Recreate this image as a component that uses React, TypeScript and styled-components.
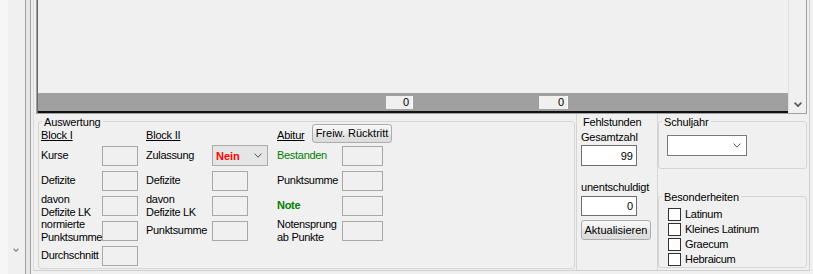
import React from 'react';
import styled, { createGlobalStyle } from 'styled-components';

const GlobalStyle = createGlobalStyle`
  html, body { margin: 0; padding: 0; background: #f0f0f0; }
  body { font-family: "Liberation Sans", Arial, sans-serif; font-size: 11px; color: #000; }
  * { box-sizing: border-box; }
`;

const Window = styled.div`
  width: 813px;
  height: 274px;
  display: flex;
  background: #f0f0f0;
  overflow: hidden;
`;

const LeftPane = styled.div`
  width: 25px;
  flex-shrink: 0;
  display: flex;
`;

const LeftList = styled.div`
  width: 8px;
  background: #f6f6f6;
`;

const LeftScroll = styled.div`
  width: 16px;
  display: flex;
  flex-direction: column;
  justify-content: flex-end;
  padding-bottom: 16px;
`;

const ArrowBox = styled.div<{ $h: number }>`
  height: ${(p) => p.$h}px;
  display: flex;
  align-items: center;
  justify-content: center;
`;

const Splitter = styled.div`
  width: 6px;
  flex-shrink: 0;
  background: #e6e6e6;
  border-left: 1px solid #a0a0a0;
  border-right: 1px solid #a0a0a0;
`;

const Main = styled.div`
  flex: 1;
  display: flex;
  padding-left: 2px;
`;

const Frame = styled.div`
  width: 777px;
  height: 271px;
  display: flex;
  flex-direction: column;
  padding: 0 2px;
  border-left: 1px solid #dadada;
  border-right: 1px solid #cfcfcf;
  border-bottom: 1px solid #cfcfcf;
`;

const Grid = styled.div`
  height: 114px;
  flex-shrink: 0;
  display: flex;
  border-left: 1px solid #a0a0a0;
  border-right: 1px solid #a0a0a0;
  border-bottom: 1px solid #a0a0a0;
`;

const GridBody = styled.div`
  flex: 1;
  display: flex;
  border-left: 1px solid #696969;
`;

const DataArea = styled.div`
  width: 750px;
  display: flex;
  flex-direction: column;
  border-bottom: 2px solid #101010;
`;

const Rows = styled.div`
  flex: 1;
  background: #f0f0f0;
`;

const Footer = styled.div`
  height: 18px;
  background: #a0a0a0;
  display: flex;
  align-items: flex-start;
  padding: 3px 0 0 348px;
`;

const FooterCell = styled.div<{ $w: number; $ml?: number }>`
  width: ${(p) => p.$w}px;
  height: 13px;
  margin-left: ${(p) => p.$ml ?? 0}px;
  background: #f0f0f0;
  border-right: 1px solid #ffffff;
  text-align: right;
  padding-right: 3px;
  line-height: 13px;
`;

const VScroll = styled.div`
  flex: 1;
  background: #f0f0f0;
  border-left: 1px solid #e2e2e2;
  display: flex;
  flex-direction: column;
  justify-content: flex-end;
`;

const Bottom = styled.div`
  flex: 1;
  display: flex;
  padding-left: 2px;
`;

const GroupBox = styled.div<{ $w: number; $h: number; $mt: number }>`
  position: relative;
  width: ${(p) => p.$w}px;
  height: ${(p) => p.$h}px;
  margin-top: ${(p) => p.$mt}px;
  border: 1px solid #d5d5d5;
  border-radius: 3px;
  flex-shrink: 0;
`;

const Caption = styled.span`
  position: absolute;
  top: -6px;
  left: 3px;
  padding: 0 2px;
  line-height: 13px;
  letter-spacing: -0.15px;
  background: #f0f0f0;
  white-space: nowrap;
`;

const Columns = styled.div`
  display: flex;
  padding-left: 2px;
`;

const Column = styled.div<{ $w: number; $ml?: number }>`
  width: ${(p) => p.$w}px;
  margin-left: ${(p) => p.$ml ?? 0}px;
  display: flex;
  flex-direction: column;
`;

const HeaderRow = styled.div`
  height: 21px;
  display: flex;
  align-items: flex-end;
`;

const FieldRow = styled.div`
  height: 25px;
  display: flex;
  align-items: center;
`;

const Heading = styled.span<{ $w?: number }>`
  ${(p) => (p.$w ? `width: ${p.$w}px;` : '')}
  line-height: 13px;
  padding-bottom: 1px;
  letter-spacing: -0.2px;
  text-decoration: underline;
  white-space: nowrap;
`;

const Label = styled.span<{ $w: number; $color?: string; $bold?: boolean }>`
  width: ${(p) => p.$w}px;
  flex-shrink: 0;
  line-height: 13px;
  letter-spacing: -0.3px;
  white-space: nowrap;
  color: ${(p) => p.$color ?? '#000'};
  font-weight: ${(p) => (p.$bold ? 'bold' : 'normal')};
`;

const ReadBox = styled.div<{ $w: number }>`
  width: ${(p) => p.$w}px;
  height: 20px;
  flex-shrink: 0;
  background: #f0f0f0;
  border: 1px solid #a8a8a8;
`;

const ZulCombo = styled.div`
  width: 56px;
  height: 21px;
  flex-shrink: 0;
  display: flex;
  align-items: center;
  justify-content: space-between;
  padding: 0 5px 0 3px;
  background: #e5e5e5;
  border: 1px solid #acacac;
  color: #ff0000;
  font-weight: bold;
`;

const Button = styled.button<{ $w: number; $h: number }>`
  width: ${(p) => p.$w}px;
  height: ${(p) => p.$h}px;
  padding: 0;
  margin: 0;
  font-family: "Liberation Sans", Arial, sans-serif;
  font-size: 11px;
  color: #000;
  line-height: 13px;
  border: 1px solid #acacac;
  border-radius: 3px;
  background: linear-gradient(#f8f8f8, #ececec 50%, #e2e2e2 51%, #dcdcdc);
  white-space: nowrap;
`;

const AbiButton = styled(Button)`
  margin-left: 7px;
`;

const FehlPanel = styled.div`
  width: 82px;
  margin-left: 1px;
  flex-shrink: 0;
  display: flex;
  flex-direction: column;
  align-items: flex-start;
  padding: 2px 0 0 4px;
  border-left: 1px solid #d5d5d5;
  border-right: 1px solid #d5d5d5;
`;

const PanelText = styled.span<{ $mt: number; $ml?: number }>`
  margin-top: ${(p) => p.$mt}px;
  margin-left: ${(p) => p.$ml ?? 0}px;
  line-height: 13px;
  letter-spacing: -0.2px;
  white-space: nowrap;
`;

const NumInput = styled.div<{ $h: number; $mt: number }>`
  width: 56px;
  height: ${(p) => p.$h}px;
  margin-top: ${(p) => p.$mt}px;
  background: #ffffff;
  border: 1px solid #6e6e6e;
  display: flex;
  align-items: center;
  justify-content: flex-end;
  padding-right: 3px;
`;

const RefreshButton = styled(Button)`
  margin-top: 4px;
`;

const RightCol = styled.div`
  width: 149px;
  flex-shrink: 0;
  display: flex;
  flex-direction: column;
`;

const GroupInner = styled.div<{ $pt: number; $pl: number }>`
  padding: ${(p) => p.$pt}px 0 0 ${(p) => p.$pl}px;
  display: flex;
  flex-direction: column;
`;

const YearCombo = styled.div`
  width: 80px;
  height: 21px;
  background: #ffffff;
  border: 1px solid #7a7a7a;
  display: flex;
  align-items: center;
  justify-content: flex-end;
  padding-right: 5px;
`;

const CheckRow = styled.label`
  height: 15px;
  display: flex;
  align-items: center;
  line-height: 13px;
  letter-spacing: -0.3px;
  white-space: nowrap;
`;

const CheckBox = styled.span`
  width: 13px;
  height: 13px;
  margin-right: 4px;
  background: #ffffff;
  border: 1px solid #333333;
  flex-shrink: 0;
`;

const Chevron = ({ w, h, color, sw }: { w: number; h: number; color: string; sw: number }) => (
  <svg width={w} height={h} viewBox={`0 0 ${w} ${h}`}>
    <polyline
      points={`0.6,0.6 ${w / 2},${h - 0.8} ${w - 0.6},0.6`}
      fill="none"
      stroke={color}
      strokeWidth={sw}
    />
  </svg>
);

export default function App() {
  return (
    <>
      <GlobalStyle />
      <Window>
        <LeftPane>
          <LeftList />
          <LeftScroll>
            <ArrowBox $h={17}>
              <Chevron w={6} h={4} color="#8a8a8a" sw={1.4} />
            </ArrowBox>
          </LeftScroll>
        </LeftPane>
        <Splitter />
        <Main>
          <Frame>
            <Grid>
              <GridBody>
                <DataArea>
                  <Rows />
                  <Footer>
                    <FooterCell $w={27}>0</FooterCell>
                    <FooterCell $w={29} $ml={126}>0</FooterCell>
                  </Footer>
                </DataArea>
                <VScroll>
                  <ArrowBox $h={17}>
                    <Chevron w={8} h={5} color="#606060" sw={1.8} />
                  </ArrowBox>
                </VScroll>
              </GridBody>
            </Grid>
            <Bottom>
              <GroupBox $w={537} $h={148} $mt={7}>
                <Caption>Auswertung</Caption>
                <Columns>
                  <Column $w={97}>
                    <HeaderRow>
                      <Heading>Block I</Heading>
                    </HeaderRow>
                    <FieldRow>
                      <Label $w={61}>Kurse</Label>
                      <ReadBox $w={36} />
                    </FieldRow>
                    <FieldRow>
                      <Label $w={61}>Defizite</Label>
                      <ReadBox $w={36} />
                    </FieldRow>
                    <FieldRow>
                      <Label $w={61}>davon<br />Defizite LK</Label>
                      <ReadBox $w={36} />
                    </FieldRow>
                    <FieldRow>
                      <Label $w={61}>normierte<br />Punktsumme</Label>
                      <ReadBox $w={36} />
                    </FieldRow>
                    <FieldRow>
                      <Label $w={61}>Durchschnitt</Label>
                      <ReadBox $w={36} />
                    </FieldRow>
                  </Column>
                  <Column $w={122} $ml={8}>
                    <HeaderRow>
                      <Heading>Block II</Heading>
                    </HeaderRow>
                    <FieldRow>
                      <Label $w={66}>Zulassung</Label>
                      <ZulCombo>
                        <span>Nein</span>
                        <Chevron w={8} h={5} color="#555555" sw={1} />
                      </ZulCombo>
                    </FieldRow>
                    <FieldRow>
                      <Label $w={66}>Defizite</Label>
                      <ReadBox $w={36} />
                    </FieldRow>
                    <FieldRow>
                      <Label $w={66}>davon<br />Defizite LK</Label>
                      <ReadBox $w={36} />
                    </FieldRow>
                    <FieldRow>
                      <Label $w={66}>Punktsumme</Label>
                      <ReadBox $w={36} />
                    </FieldRow>
                  </Column>
                  <Column $w={116} $ml={9}>
                    <HeaderRow>
                      <Heading $w={28}>Abitur</Heading>
                      <AbiButton $w={80} $h={19}>Freiw. Rücktritt</AbiButton>
                    </HeaderRow>
                    <FieldRow>
                      <Label $w={65} $color="#008000">Bestanden</Label>
                      <ReadBox $w={41} />
                    </FieldRow>
                    <FieldRow>
                      <Label $w={65}>Punktsumme</Label>
                      <ReadBox $w={41} />
                    </FieldRow>
                    <FieldRow>
                      <Label $w={65} $color="#008000" $bold>Note</Label>
                      <ReadBox $w={41} />
                    </FieldRow>
                    <FieldRow>
                      <Label $w={65}>Notensprung<br />ab Punkte</Label>
                      <ReadBox $w={41} />
                    </FieldRow>
                  </Column>
                </Columns>
              </GroupBox>
              <FehlPanel>
                <PanelText $mt={0} $ml={2}>Fehlstunden</PanelText>
                <PanelText $mt={2}>Gesamtzahl</PanelText>
                <NumInput $h={21} $mt={1}>99</NumInput>
                <PanelText $mt={15}>unentschuldigt</PanelText>
                <NumInput $h={20} $mt={2}>0</NumInput>
                <RefreshButton $w={70} $h={20}>Aktualisieren</RefreshButton>
              </FehlPanel>
              <RightCol>
                <GroupBox $w={149} $h={48} $mt={7}>
                  <Caption>Schuljahr</Caption>
                  <GroupInner $pt={13} $pl={8}>
                    <YearCombo>
                      <Chevron w={8} h={5} color="#555555" sw={1} />
                    </YearCombo>
                  </GroupInner>
                </GroupBox>
                <GroupBox $w={149} $h={72} $mt={27}>
                  <Caption>Besonderheiten</Caption>
                  <GroupInner $pt={10} $pl={9}>
                    <CheckRow><CheckBox />Latinum</CheckRow>
                    <CheckRow><CheckBox />Kleines Latinum</CheckRow>
                    <CheckRow><CheckBox />Graecum</CheckRow>
                    <CheckRow><CheckBox />Hebraicum</CheckRow>
                  </GroupInner>
                </GroupBox>
              </RightCol>
            </Bottom>
          </Frame>
        </Main>
      </Window>
    </>
  );
}
